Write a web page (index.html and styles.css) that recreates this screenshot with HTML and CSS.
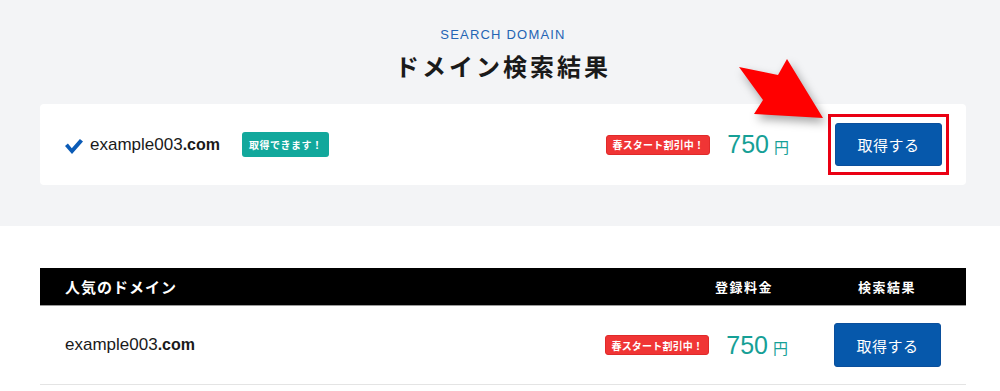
FILE: index.html
```html
<!DOCTYPE html>
<html lang="ja">
<head>
    <meta charset="UTF-8">
    <meta name="viewport" content="width=device-width, initial-scale=1.0">
    <title>ドメイン検索結果</title>
    <link rel="stylesheet" href="styles.css">
</head>
<body>
    <section class="search-head">
        <p class="eyebrow">SEARCH DOMAIN</p>
        <h1 class="title">ドメイン検索結果</h1>

        <div class="result-card">
            <div class="domain-info">
                <svg class="check" viewBox="0 0 18 15" xmlns="http://www.w3.org/2000/svg">
                    <path d="M0 7 L2.9 4.5 L6.8 9.2 L14.9 0 L18 2.4 L7 15 Z" />
                </svg>
                <span class="domain">example003<b>.com</b></span>
                <span class="badge badge-ok">取得できます！</span>
            </div>
            <div class="price-info">
                <span class="badge badge-sale">春スタート割引中！</span>
                <span class="price">750<small>円</small></span>
                <span class="highlight">
                    <button class="btn-get">取得する</button>
                </span>
            </div>
        </div>

        <!-- 注目の矢印 -->
        <svg class="arrow" viewBox="0 0 120 100" xmlns="http://www.w3.org/2000/svg">
            <polygon points="19,27 58,35 67,19 103,78 34,74 43,60" />
        </svg>
    </section>

    <section class="popular">
        <div class="table-head">
            <span class="col-name">人気のドメイン</span>
            <span class="col-price">登録料金</span>
            <span class="col-result">検索結果</span>
        </div>
        <div class="table-row">
            <span class="domain">example003<b>.com</b></span>
            <div class="price-info">
                <span class="badge badge-sale">春スタート割引中！</span>
                <span class="price">750<small>円</small></span>
                <span class="btn-cell">
                    <button class="btn-get">取得する</button>
                </span>
            </div>
        </div>
    </section>
</body>
</html>
```

FILE: styles.css
```css
body {
    margin: 0;
    padding: 0;
    background-color: #fff;
    color: #1a1a1a;
    font-family: "Liberation Sans", "Noto Sans CJK JP", sans-serif;
}

/* 上部：検索結果 */
.search-head {
    position: relative;
    background-color: #f3f4f6;
    padding: 26px 34px 41px 40px;
}

.eyebrow {
    margin: 0;
    text-align: center;
    font-size: 13px;
    line-height: 18px;
    letter-spacing: 1.2px;
    color: #2464b4;
}

.title {
    margin: 4px 0 0;
    text-align: center;
    font-family: "Noto Sans CJK JP", sans-serif;
    font-size: 24px;
    line-height: 36px;
    font-weight: 700;
    letter-spacing: 3px;
    color: #1a1a1a;
}

.result-card {
    margin-top: 20px;
    height: 81px;
    box-sizing: border-box;
    display: flex;
    justify-content: space-between;
    align-items: center;
    padding: 0 17px 0 25px;
    background-color: #fff;
    border-radius: 4px;
}

.domain-info {
    display: flex;
    align-items: center;
}

.check {
    width: 18px;
    height: 15px;
    fill: #0b5bb6;
    margin-right: 7px;
    margin-top: 3px;
}

.domain {
    font-size: 17px;
    color: #1a1a1a;
}

.domain b {
    font-weight: 700;
    font-size: 16px;
}

.badge {
    display: inline-flex;
    align-items: center;
    font-family: "Noto Sans CJK JP", sans-serif;
    font-weight: 700;
    font-size: 10px;
    letter-spacing: 0.5px;
    color: #fff;
    border-radius: 3px;
    box-sizing: border-box;
}

.badge-ok {
    margin-left: 22px;
    height: 25px;
    padding: 0 7px;
    background-color: #12a89c;
}

.badge-sale {
    height: 20px;
    padding: 0 5px;
    letter-spacing: 0.2px;
    background-color: #f03535;
    border: 1px solid #e02a2a;
}

.price-info {
    display: flex;
    align-items: center;
}

.price {
    margin-left: 17px;
    font-size: 25px;
    color: #16a096;
    line-height: 1;
}

.price small {
    font-family: "Noto Sans CJK JP", sans-serif;
    font-size: 15px;
    margin-left: 5px;
}

.highlight {
    margin-left: 39px;
    padding: 6px 4px;
    border: 3px solid #ea0013;
    display: flex;
}

.btn-get {
    width: 107px;
    height: 43px;
    border: 1px solid #0a4f9c;
    border-radius: 3px;
    background-color: #0658ab;
    color: #fff;
    font-family: "Noto Sans CJK JP", sans-serif;
    font-size: 15px;
    letter-spacing: 0.5px;
    cursor: pointer;
}

.arrow {
    position: absolute;
    left: 720px;
    top: 40px;
    width: 120px;
    height: 100px;
    fill: #ff0000;
    filter: drop-shadow(3px 5px 5px rgba(0, 0, 0, 0.35));
}

/* 下部：人気のドメイン */
.popular {
    padding: 42px 34px 0 40px;
}

.table-head {
    display: flex;
    align-items: center;
    height: 37px;
    padding-left: 25px;
    background-color: #000;
    border-bottom: 1px solid #9a9a9a;
    color: #fff;
    font-family: "Noto Sans CJK JP", sans-serif;
    font-weight: 700;
}

.col-name {
    flex: 1;
    font-size: 15px;
    letter-spacing: 1px;
}

.col-price,
.col-result {
    font-size: 13px;
    letter-spacing: 1.5px;
    text-align: center;
}

.col-price {
    width: 128px;
}

.col-result {
    width: 158px;
}

.table-row {
    display: flex;
    justify-content: space-between;
    align-items: center;
    height: 78px;
    padding: 0 25px;
    border-bottom: 1px solid #e4e4e4;
}

.btn-cell {
    margin-left: 46px;
    display: flex;
}

.btn-cell .btn-get {
    height: 44px;
}
```
